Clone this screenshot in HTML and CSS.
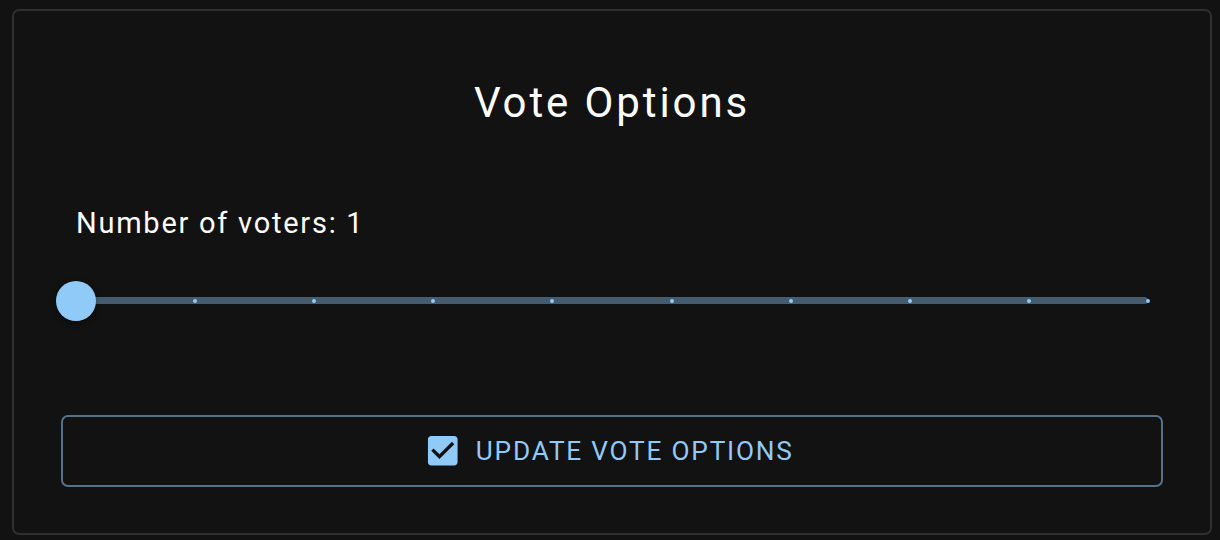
FILE: index.html
```html
<!DOCTYPE html>
<html lang="en">
<head>
<meta charset="utf-8">
<title>Vote Options</title>
<link rel="stylesheet" href="styles.css">
</head>
<body>
<div class="card">
  <h2 class="title">Vote Options</h2>
  <div class="field">
    <p class="label">Number of voters: 1</p>
    <div class="slider">
      <span class="rail"></span>
      <span class="mark" style="left:0%"></span>
      <span class="mark" style="left:11.111%"></span>
      <span class="mark" style="left:22.222%"></span>
      <span class="mark" style="left:33.333%"></span>
      <span class="mark" style="left:44.444%"></span>
      <span class="mark" style="left:55.556%"></span>
      <span class="mark" style="left:66.667%"></span>
      <span class="mark" style="left:77.778%"></span>
      <span class="mark" style="left:88.889%"></span>
      <span class="mark" style="left:100%"></span>
      <span class="thumb" style="left:0%"></span>
    </div>
  </div>
  <button class="btn" type="button">
    <svg class="btn-icon" viewBox="0 0 24 24" aria-hidden="true"><path d="M19 3H5c-1.11 0-2 .9-2 2v14c0 1.1.89 2 2 2h14c1.11 0 2-.9 2-2V5c0-1.1-.89-2-2-2zm-9 14l-5-5 1.41-1.41L10 14.17l7.59-7.59L19 8l-9 9z"/></svg>
    <span class="btn-text">Update Vote Options</span>
  </button>
</div>
</body>
</html>
```

FILE: styles.css
```css
html, body {
  margin: 0;
  padding: 0;
  background: #121212;
}
body {
  font-family: Roboto, "Noto Sans", "Liberation Sans", sans-serif;
  color: #ffffff;
}
.card {
  box-sizing: border-box;
  width: 1200px;
  margin: 9px 0 0 12px;
  border: 2px solid #2f2f2f;
  border-radius: 7px;
  background: #121212;
  padding: 64px 47px 46px;
  display: flex;
  flex-direction: column;
}
.title {
  margin: 0;
  font-size: 42px;
  font-weight: 400;
  line-height: 56px;
  letter-spacing: 2.9px;
  text-align: center;
}
.field {
  margin: 71px 15px 0;
  display: flex;
  flex-direction: column;
}
.label {
  margin: 0;
  font-size: 29px;
  line-height: 42px;
  font-weight: 400;
  letter-spacing: 1.75px;
}
.slider {
  position: relative;
  height: 40px;
  margin-top: 37px;
}
.rail {
  position: absolute;
  left: 0;
  right: 0;
  top: 16px;
  height: 7px;
  border-radius: 4px;
  background: #455c6f;
}
.mark {
  position: absolute;
  top: 20px;
  width: 4px;
  height: 4px;
  border-radius: 50%;
  background: #90caf9;
  transform: translate(-50%, -50%);
}
.thumb {
  position: absolute;
  top: 0;
  width: 40px;
  height: 40px;
  border-radius: 50%;
  background: #90caf9;
  transform: translateX(-50%);
  box-shadow: 0 5px 2px -3px rgba(0,0,0,0.2), 0 3px 4px 0 rgba(0,0,0,0.14), 0 2px 9px 0 rgba(0,0,0,0.12);
}
.btn {
  margin-top: 94px;
  box-sizing: border-box;
  height: 72px;
  width: 100%;
  border: 2px solid #54728a;
  border-radius: 7px;
  background: transparent;
  display: flex;
  align-items: center;
  justify-content: center;
  padding: 0 37px;
  font-family: Roboto, "Noto Sans", "Liberation Sans", sans-serif;
  cursor: pointer;
}
.btn-icon {
  width: 39.5px;
  height: 39.5px;
  fill: #90caf9;
  margin: 0 13px 0 -7px;
  flex: none;
}
.btn-text {
  color: #90caf9;
  font-size: 26.25px;
  font-weight: 400;
  letter-spacing: 1.77px;
  text-transform: uppercase;
  line-height: 46px;
}
```
